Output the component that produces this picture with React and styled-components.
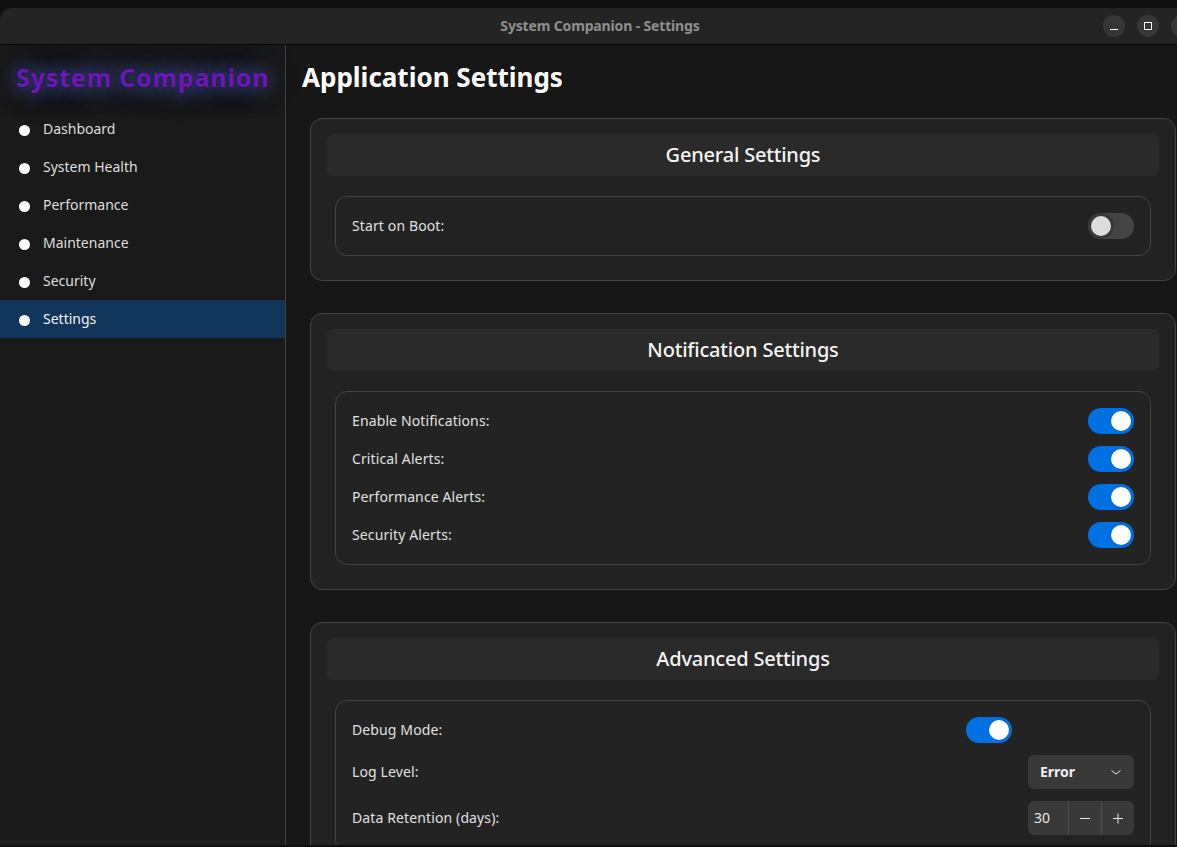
import React from "react";
import styled, { createGlobalStyle } from "styled-components";

const GlobalStyle = createGlobalStyle`
  html, body {
    margin: 0;
    background: #0f0f0f;
    font-family: "Noto Sans", "Open Sans", sans-serif;
    color: #e8e8e8;
  }
`;

const NAV_ITEMS = ["Dashboard", "System Health", "Performance", "Maintenance", "Security", "Settings"];

const App = () => {
  return (
    <Screen>
      <GlobalStyle />
      <Window>
        <TitleBar>
          <WindowTitle>System Companion - Settings</WindowTitle>
          <WindowButtons>
            <WindowButton aria-label="Minimize">
              <svg width="10" height="10" viewBox="0 0 10 10"><path d="M1 8.5h8" stroke="#fff" strokeWidth="1" /></svg>
            </WindowButton>
            <WindowButton aria-label="Maximize">
              <svg width="10" height="10" viewBox="0 0 10 10"><rect x="1.5" y="1.5" width="7" height="7" fill="none" stroke="#fff" strokeWidth="1" /></svg>
            </WindowButton>
            <WindowButton aria-label="Close" />
          </WindowButtons>
        </TitleBar>
        <Body>
          <Sidebar>
            <Brand>System Companion</Brand>
            <Nav>
              {NAV_ITEMS.map((item) => (
                <NavItem key={item} $active={item === "Settings"}>
                  <Dot />
                  {item}
                </NavItem>
              ))}
            </Nav>
          </Sidebar>
          <Content>
            <PageTitle>Application Settings</PageTitle>
            <Cards>
              <Card>
                <CardHeader>General Settings</CardHeader>
                <Group>
                  <Row>
                    <Label>Start on Boot:</Label>
                    <Toggle />
                  </Row>
                </Group>
              </Card>
              <Card>
                <CardHeader>Notification Settings</CardHeader>
                <Group>
                  <Row>
                    <Label>Enable Notifications:</Label>
                    <Toggle $on />
                  </Row>
                  <Row>
                    <Label>Critical Alerts:</Label>
                    <Toggle $on />
                  </Row>
                  <Row>
                    <Label>Performance Alerts:</Label>
                    <Toggle $on />
                  </Row>
                  <Row>
                    <Label>Security Alerts:</Label>
                    <Toggle $on />
                  </Row>
                </Group>
              </Card>
              <Card>
                <CardHeader>Advanced Settings</CardHeader>
                <Group>
                  <Row $inset>
                    <Label>Debug Mode:</Label>
                    <Toggle $on />
                  </Row>
                  <Row>
                    <Label>Log Level:</Label>
                    <Select>
                      Error
                      <svg width="12" height="12" viewBox="0 0 12 12">
                        <path d="M1.5 4.5L6 8l4.5-3.5" fill="none" stroke="#e8e8e8" strokeWidth="1" />
                      </svg>
                    </Select>
                  </Row>
                  <Row>
                    <Label>Data Retention (days):</Label>
                    <Spin>
                      <SpinValue>30</SpinValue>
                      <SpinButton>
                        <svg width="12" height="12" viewBox="0 0 12 12"><path d="M1 6.5h10" stroke="#e8e8e8" strokeWidth="1" /></svg>
                      </SpinButton>
                      <SpinButton>
                        <svg width="12" height="12" viewBox="0 0 12 12"><path d="M1 6.5h10M6 1.5v10" stroke="#e8e8e8" strokeWidth="1" /></svg>
                      </SpinButton>
                    </Spin>
                  </Row>
                </Group>
              </Card>
            </Cards>
          </Content>
        </Body>
      </Window>
    </Screen>
  );
};

export default App;

const Screen = styled("div")`
  height: 847px;
  padding: 8px 0 2px;
  box-sizing: border-box;
  overflow: hidden;
`;
const Window = styled("div")`
  width: 1200px;
  height: 837px;
  display: flex;
  flex-direction: column;
  border-radius: 12px 12px 0 0;
  overflow: hidden;
  background: #171717;
`;
const TitleBar = styled("header")`
  flex: none;
  height: 36px;
  position: relative;
  display: flex;
  align-items: center;
  justify-content: center;
  background: #242424;
  border-bottom: 1px solid #050505;
`;
const WindowTitle = styled("div")`
  padding-bottom: 2px;
  font-size: 14px;
  font-weight: 700;
  letter-spacing: -0.15px;
  color: #8f8f8f;
`;
const WindowButtons = styled("div")`
  position: absolute;
  right: 7px;
  top: 7px;
  display: flex;
  gap: 12px;
`;
const WindowButton = styled("div")`
  width: 22px;
  height: 22px;
  border-radius: 50%;
  background: #363636;
  display: flex;
  align-items: center;
  justify-content: center;
`;
const Body = styled("div")`
  flex: 1;
  min-height: 0;
  display: flex;
`;
const Sidebar = styled("aside")`
  flex: none;
  width: 285px;
  background: #1a1a1a;
  border-right: 1px solid #444;
`;
const Brand = styled("div")`
  height: 65px;
  line-height: 64px;
  padding-left: 16px;
  font-size: 25px;
  font-weight: 700;
  letter-spacing: 0.85px;
  white-space: nowrap;
  color: #6c18b8;
  text-shadow: 0 0 2px #141432, 0 0 16px rgba(80, 100, 190, 0.6), 0 0 24px rgba(80, 100, 190, 0.6),
    0 0 30px rgba(80, 100, 190, 0.5);
`;
const Nav = styled("nav")`
  display: flex;
  flex-direction: column;
`;
const NavItem = styled("div")`
  height: 38px;
  box-sizing: border-box;
  padding: 0 0 2px 19px;
  display: flex;
  align-items: center;
  gap: 13px;
  font-size: 14px;
  color: ${(p) => (p.$active ? "#f2f2f2" : "#dedede")};
  background: ${(p) => (p.$active ? "#12355b" : "transparent")};
`;
const Dot = styled("span")`
  width: 11px;
  height: 11px;
  margin-top: 4px;
  border-radius: 50%;
  background: #fff;
`;
const Content = styled("main")`
  flex: 1;
  min-width: 0;
  overflow: hidden;
  padding: 0 24px 0 16px;
`;
const PageTitle = styled("h1")`
  margin: 0;
  height: 73px;
  line-height: 64px;
  font-size: 26px;
  font-weight: 700;
  color: #fff;
`;
const Cards = styled("div")`
  display: flex;
  flex-direction: column;
  gap: 32px;
  padding-left: 8px;
`;
const Card = styled("section")`
  padding: 15px 16px 24px;
  background: #232323;
  border: 1px solid #444;
  border-radius: 12px;
`;
const CardHeader = styled("h2")`
  margin: 0 0 20px;
  height: 42px;
  line-height: 42px;
  text-align: center;
  font-size: 20px;
  font-weight: 500;
  letter-spacing: -0.2px;
  color: #f5f5f5;
  background: #2a2a2a;
  border-radius: 6px;
`;
const Group = styled("div")`
  margin: 0 8px;
  padding: 16px;
  display: flex;
  flex-direction: column;
  gap: 12px;
  border: 1px solid #444;
  border-radius: 12px;
`;
const Row = styled("div")`
  display: flex;
  align-items: center;
  justify-content: space-between;
  min-height: 26px;
  padding-right: ${(p) => (p.$inset ? "122px" : "0")};
`;
const Label = styled("span")`
  padding-bottom: 2px;
  font-size: 14px;
  letter-spacing: 0.12px;
  color: #e0e0e0;
`;
const Toggle = styled("div")`
  position: relative;
  width: 46px;
  height: 26px;
  border-radius: 13px;
  background: ${(p) => (p.$on ? "#0071e3" : "#444")};
  &::after {
    content: "";
    position: absolute;
    top: 3px;
    left: ${(p) => (p.$on ? "23px" : "3px")};
    width: 20px;
    height: 20px;
    border-radius: 50%;
    background: ${(p) => (p.$on ? "#fff" : "#dcdcdc")};
    box-shadow: ${(p) => (p.$on ? "0 0 2px rgba(0, 0, 0, 0.25)" : "0 0 0 3px #383838")};
  }
`;
const Select = styled("div")`
  width: 106px;
  height: 34px;
  box-sizing: border-box;
  padding: 0 12px 1px;
  display: flex;
  align-items: center;
  justify-content: space-between;
  font-size: 14px;
  font-weight: 700;
  color: #efefef;
  background: #393939;
  border-radius: 6px;
`;
const Spin = styled("div")`
  width: 106px;
  height: 34px;
  display: flex;
  background: #393939;
  border-radius: 6px;
  overflow: hidden;
`;
const SpinValue = styled("div")`
  flex: 1;
  padding-left: 6px;
  line-height: 34px;
  font-size: 14px;
  color: #e8e8e8;
`;
const SpinButton = styled("div")`
  flex: none;
  width: 32px;
  display: flex;
  align-items: center;
  justify-content: center;
  border-left: 1px solid #505050;
`;
